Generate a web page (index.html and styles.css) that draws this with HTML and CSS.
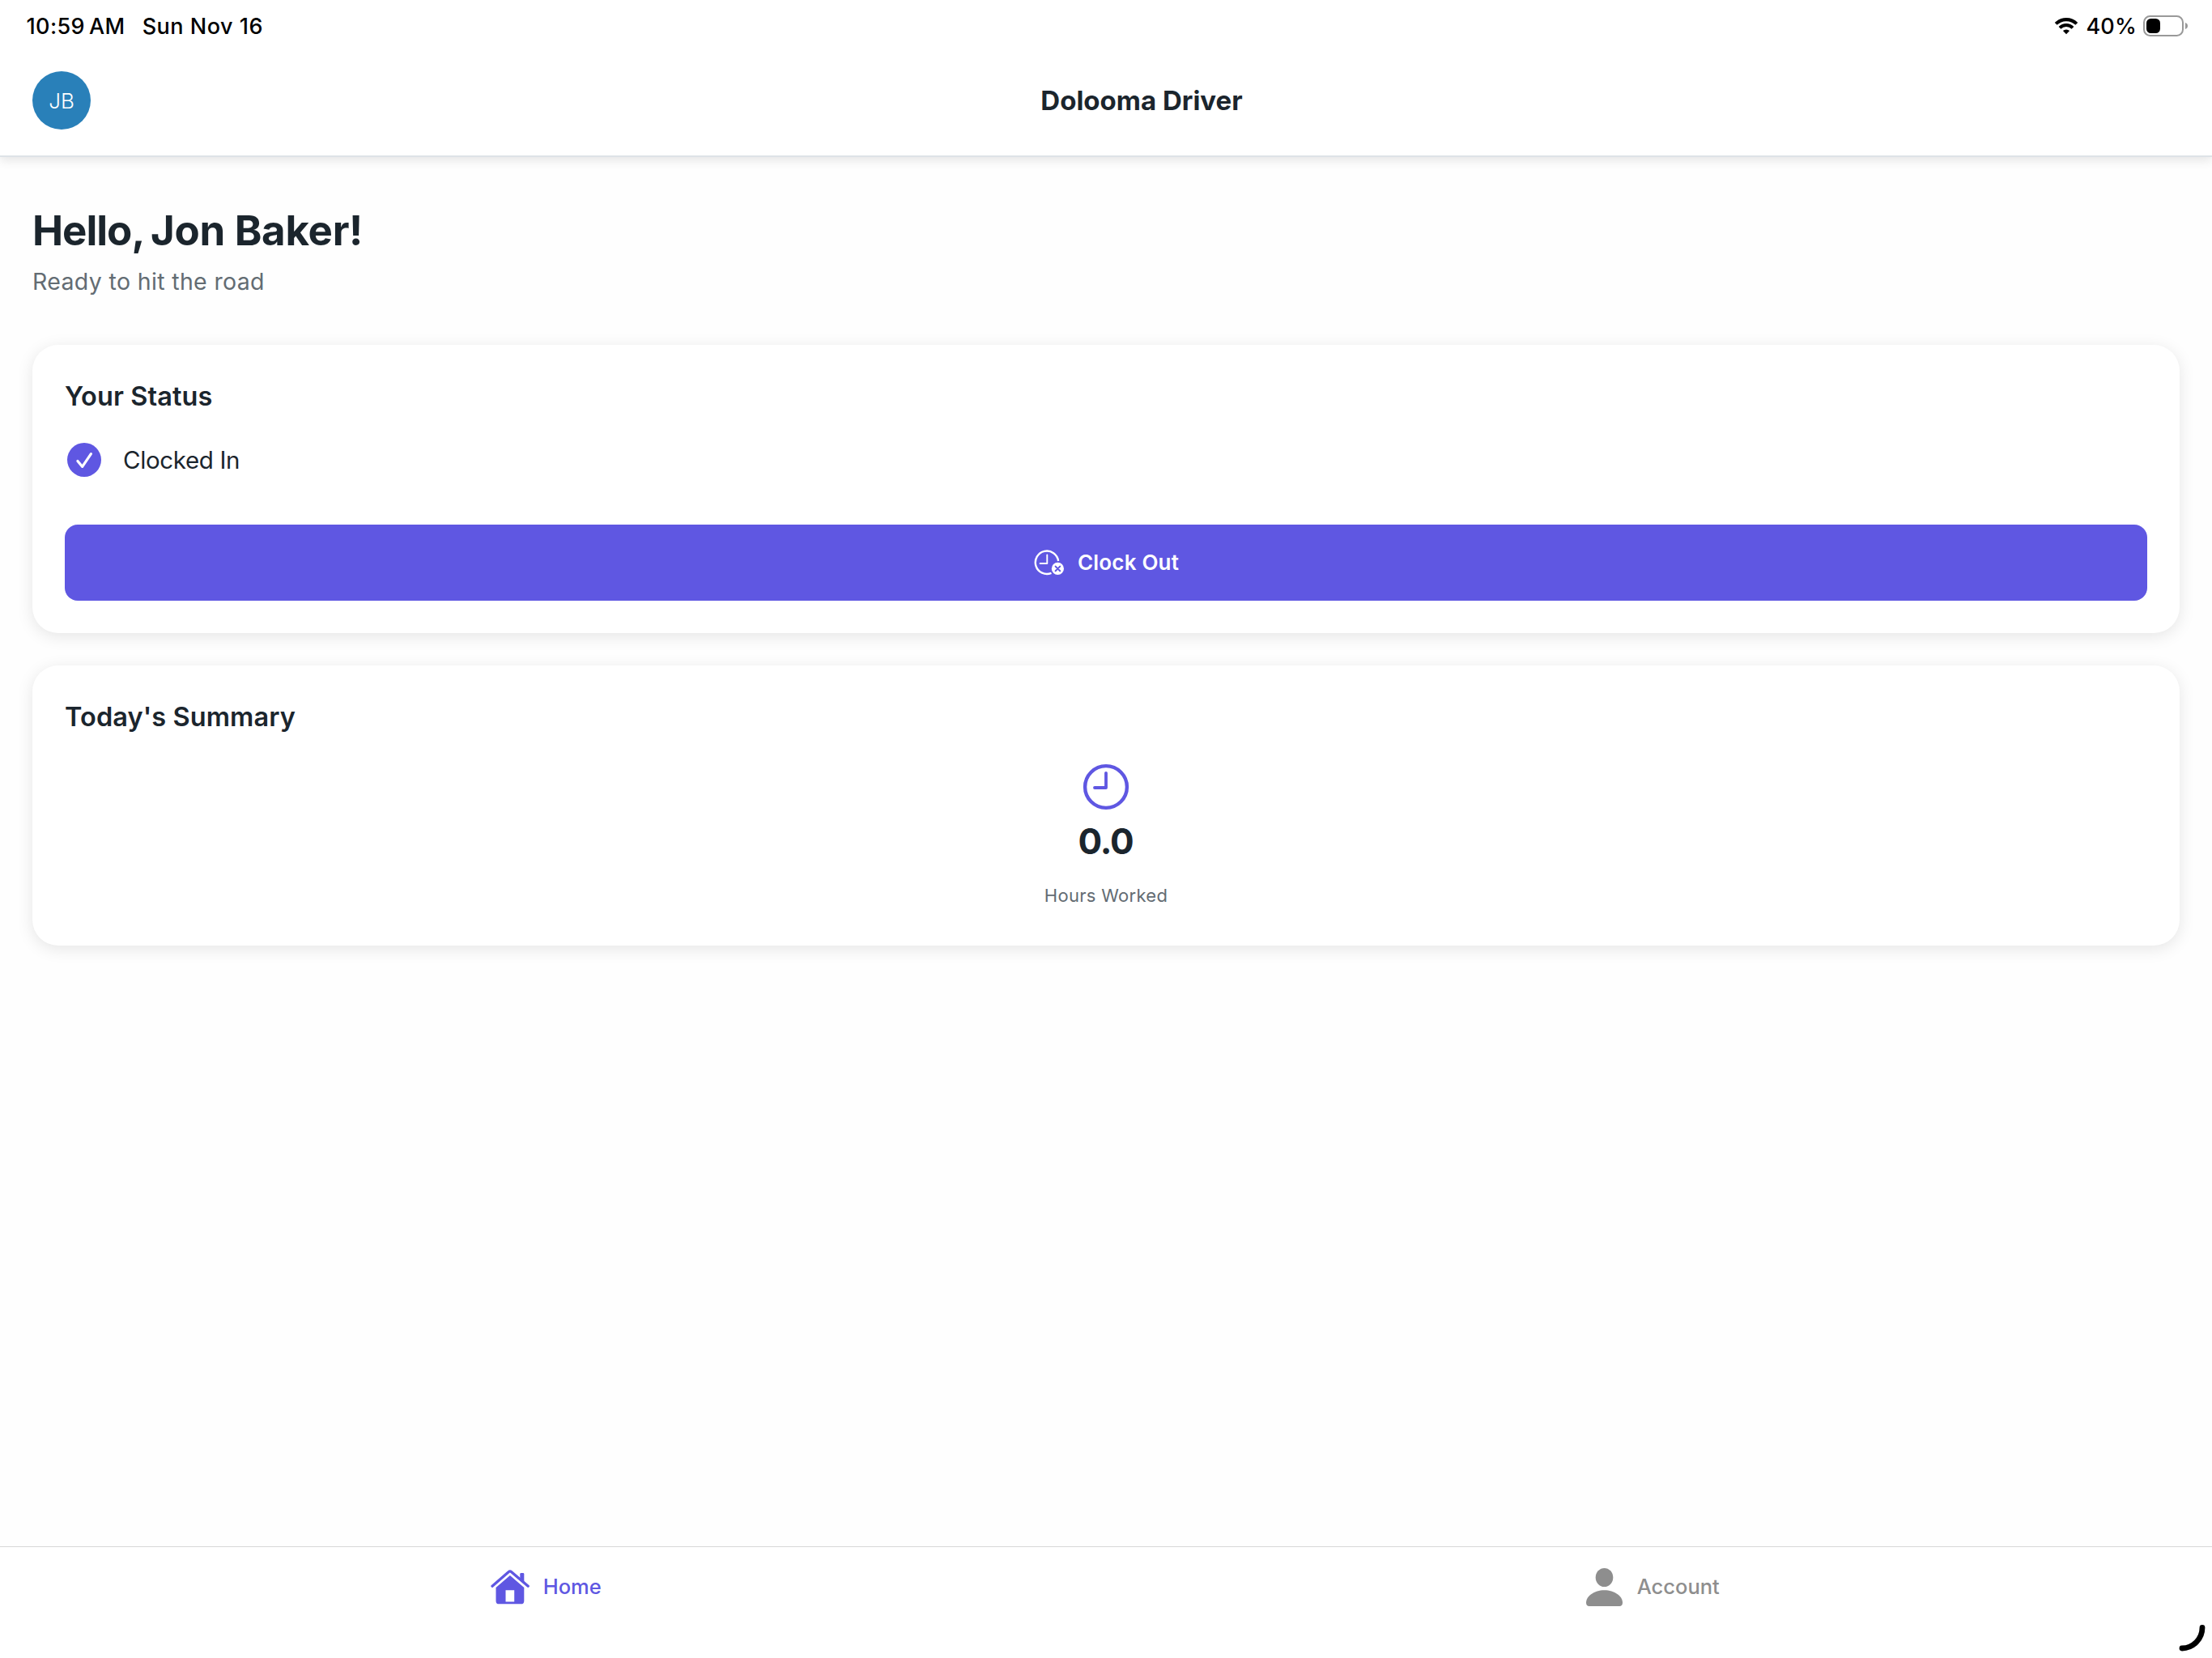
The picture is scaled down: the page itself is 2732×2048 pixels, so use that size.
FILE: index.html
```html
<!DOCTYPE html>
<html lang="en">
<head>
<meta charset="utf-8">
<title>Dolooma Driver</title>
<link rel="stylesheet" href="styles.css">
</head>
<body>
<div class="app">
  <div class="statusbar">
    <div class="statusbar-left"><span class="time">10:59<span class="ampm">AM</span></span><span class="date">Sun Nov 16</span></div>
    <div class="statusbar-right">
      <svg class="wifi" viewBox="0 0 30 22" width="30" height="22">
        <path d="M2.2 8.4A18.2 18.2 0 0 1 27.8 8.4" fill="none" stroke="#000" stroke-width="4.1"/>
        <path d="M7 13.4A11.4 11.4 0 0 1 23 13.4" fill="none" stroke="#000" stroke-width="4"/>
        <path d="M10.9 17.1a5.9 5.9 0 0 1 8.2 0L15 21.3z" fill="#000"/>
      </svg>
      <span class="battery-text">40%</span>
      <svg class="battery" viewBox="0 0 56 26" width="56" height="26">
        <rect x="1" y="1" width="48" height="24" rx="7.5" fill="none" stroke="#999" stroke-width="2"/>
        <rect x="4" y="4" width="17" height="18" rx="5.5" fill="#000"/>
        <path d="M52 9c4 1.2 4 6.8 0 8z" fill="#999"/>
      </svg>
    </div>
  </div>
  <header class="header">
    <div class="avatar">JB</div>
    <h1 class="header-title">Dolooma Driver</h1>
  </header>
  <main class="content">
    <h2 class="greeting">Hello, <span class="greeting-name">Jon Baker!</span></h2>
    <p class="subtitle">Ready to hit the road</p>
    <section class="card">
      <h3 class="card-title">Your Status</h3>
      <div class="status-row">
        <svg viewBox="0 0 48 48" width="48" height="48">
          <circle cx="24" cy="24" r="21" fill="#5f57e2"/>
          <path d="M15.9 25.4L21.7 32.4L32.4 16.6" fill="none" stroke="#fff" stroke-width="3.2" stroke-linecap="round" stroke-linejoin="round"/>
        </svg>
        <span class="status-text">Clocked In</span>
      </div>
      <button class="clock-btn">
        <svg viewBox="0 0 38 32" width="38" height="32">
          <path d="M21.5 28.9A14.2 14.2 0 1 1 30.1 14" fill="none" stroke="#fff" stroke-width="2.4"/>
          <path d="M16.3 6.5V17H7.6" fill="none" stroke="#fff" stroke-width="1.9" stroke-linecap="round" stroke-linejoin="round"/>
          <circle cx="29.4" cy="23.4" r="7.6" fill="#fff"/>
          <path d="M26.6 20.6l5.6 5.6M32.2 20.6l-5.6 5.6" stroke="#5f57e2" stroke-width="2" stroke-linecap="round"/>
        </svg>
        <span class="btn-text">Clock Out</span>
      </button>
    </section>
    <section class="card">
      <h3 class="card-title">Today's Summary</h3>
      <div class="stat">
        <svg viewBox="0 0 64 64" width="64" height="64">
          <circle cx="32" cy="32" r="25.9" fill="none" stroke="#5f57e2" stroke-width="4.4"/>
          <path d="M32 14.8V33H18" fill="none" stroke="#5f57e2" stroke-width="3.8" stroke-linecap="round" stroke-linejoin="round"/>
        </svg>
        <div class="stat-value">0.0</div>
        <div class="stat-label">Hours Worked</div>
      </div>
    </section>
  </main>
  <nav class="tabs">
    <a class="tab tab-active">
      <svg viewBox="0 0 48 48" width="48" height="48">
        <path d="M2 23.2L22.1 5.7Q23.9 4.1 25.7 5.7L46.2 23.2" fill="none" stroke="#5f57e2" stroke-width="3.3" stroke-linecap="round"/>
        <path d="M36.3 8.2Q36.3 6.9 37.6 6.9H40Q41.3 6.9 41.3 8.2V19.5L36.3 15.2z" fill="#5f57e2"/>
        <path fill-rule="evenodd" d="M23.9 10L41.3 25V41.4Q41.3 45.3 37.4 45.3H10.4Q6.5 45.3 6.5 41.4V25zM18.5 28.3V42.5H29.2V28.3z" fill="#5f57e2"/>
      </svg>
      <span class="tab-text">Home</span>
    </a>
    <a class="tab">
      <svg viewBox="0 0 48 50" width="48" height="50">
        <ellipse cx="24.5" cy="13.5" rx="10.8" ry="11.6" fill="#8e8e8e"/>
        <path d="M2 44.6C2 36.5 12 29.2 24.5 29.2S47 36.5 47 44.6Q47 49 43.2 49H5.8Q2 49 2 44.6z" fill="#8e8e8e"/>
      </svg>
      <span class="tab-text">Account</span>
    </a>
  </nav>
  <svg class="corner" viewBox="0 0 40 44" width="40" height="44">
    <path d="M11 33A25.5 25.5 0 0 0 36 7.5" fill="none" stroke="#000" stroke-width="6.8" stroke-linecap="round"/>
  </svg>
</div>
</body>
</html>
```
FILE: styles.css
```css
* { box-sizing: border-box; }
body { margin: 0; font-family: Inter, "Liberation Sans", sans-serif; background: #fefefe; color: #1b252d; }
h1, h2, h3, p { margin: 0; }
svg { display: block; flex: none; }
.app { position: relative; width: 2732px; height: 2048px; display: flex; flex-direction: column; overflow: hidden; white-space: nowrap; }

.statusbar { position: relative; z-index: 1; height: 64px; flex: none; display: flex; justify-content: space-between; align-items: center; padding: 0 29px 0 32.5px; background: #fff; color: #000; font-size: 27px; font-weight: 500; }
.statusbar-left { display: flex; gap: 21px; }
.time { letter-spacing: 0.4px; }
.date { letter-spacing: 0.5px; }
.ampm { margin-left: 5px; }
.statusbar-right { display: flex; align-items: center; }
.battery-text { margin: 0 8px 0 9px; letter-spacing: 0.2px; }

.header { height: 130px; flex: none; display: flex; align-items: center; padding: 0 40px 8px; gap: 16px; background: #fff; border-bottom: 2px solid #dee3e7; box-shadow: 0 4px 12px rgba(0, 0, 0, 0.1); }
.avatar { width: 72px; height: 72px; border-radius: 50%; background: #2980b9; color: #fff; display: flex; align-items: center; justify-content: center; font-size: 26px; font-weight: 300; }
.header-title { flex: 1; text-align: center; font-size: 33px; line-height: 40px; font-weight: 700; letter-spacing: 0; }

.content { flex: 1; padding: 61px 40px 0; }
.greeting { font-size: 51px; line-height: 60px; font-weight: 700; letter-spacing: -1px; }
.greeting-name { margin-left: -2px; letter-spacing: -0.3px; }
.subtitle { margin: 12px 0 58px; font-size: 28.5px; line-height: 41px; color: #636c73; letter-spacing: 0.35px; }
.card { margin-bottom: 40px; padding: 40px; border-radius: 32px; background: #fff; box-shadow: 0 4px 20px rgba(0, 0, 0, 0.1); }
.card-title { padding-top: 1px; font-size: 32.5px; line-height: 45px; font-weight: 600; letter-spacing: 0.1px; }
.status-row { margin: 32px 0 56px; height: 48px; display: flex; align-items: center; gap: 24px; }
.status-text { font-size: 29.5px; letter-spacing: -0.35px; }
.clock-btn { width: 100%; height: 94px; padding: 0 0 0 1px; border: 0; border-radius: 16px; background: #5f57e2; color: #fff; display: flex; align-items: center; justify-content: center; gap: 16px; font: 600 26px Inter, sans-serif; letter-spacing: 0.2px; }
.btn-text { padding-bottom: 2px; }
.stat { padding-top: 32px; display: flex; flex-direction: column; align-items: center; }
.stat-value { margin: 7px 0 17px; padding-right: 1px; font-size: 44px; line-height: 56px; font-weight: 700; letter-spacing: -1.2px; }
.stat-label { font-size: 22px; line-height: 44px; color: #636c73; letter-spacing: 0.3px; }

.tabs { flex: none; height: 138px; border-top: 1px solid #d8d8d8; background: #fff; display: flex; align-items: flex-start; }
.tab { flex: 1; height: 98px; display: flex; align-items: center; justify-content: center; gap: 16.5px; padding-right: 17px; font-size: 25.5px; font-weight: 500; color: #8e8e8e; }
.tab-text { padding-bottom: 2px; }
.tab-active { color: #5f57e2; }
.corner { position: absolute; right: 8px; bottom: 1px; }
```
